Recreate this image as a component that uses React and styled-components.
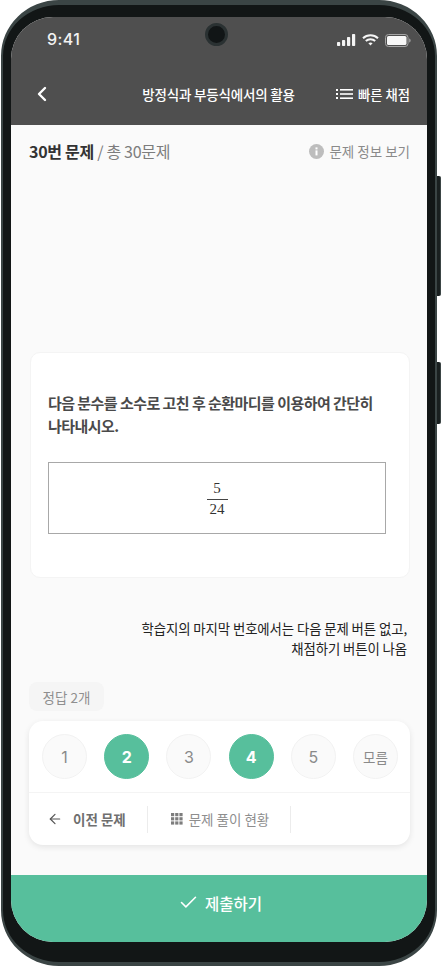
import React from 'react';
import styled, { createGlobalStyle } from 'styled-components';
import { ArrowLeft, Check, ChevronLeft } from 'lucide-react';

const SANS = `"Noto Sans CJK KR", "Noto Sans", sans-serif`;
const GREEN = '#57bf9c';

const GlobalStyle = createGlobalStyle`
  html, body {
    margin: 0;
    padding: 0;
    background: #fff;
  }
  body {
    font-family: ${SANS};
  }
  * {
    box-sizing: border-box;
  }
`;

const Phone = styled.div`
  position: relative;
  width: 436px;
  height: 966px;
  margin-left: 1px;
  padding: 12px 8px 19px 8px;
  background: #121616;
  border-style: solid;
  border-color: #3b4545;
  border-width: 5px 2px 4px 2px;
  border-radius: 58px / 56px;
`;

const SideButton = styled.div`
  position: absolute;
  left: 434px;
  top: ${(p) => p.$top}px;
  width: 4px;
  height: ${(p) => p.$height}px;
  background: #1a2020;
  border-right: 1px solid #3b4545;
  border-radius: 0 2px 2px 0;
`;

const Screen = styled.div`
  display: flex;
  flex-direction: column;
  height: 925px;
  border-radius: 42px;
  overflow: hidden;
  background: #fafafa;
`;

const Header = styled.header`
  flex: none;
  height: 108px;
  background: #4f4f4f;
  color: #fff;
  padding: 0 17px 0 25px;
`;

const StatusBar = styled.div`
  position: relative;
  display: flex;
  align-items: center;
  justify-content: space-between;
  height: 44px;
  padding: 0 0 0 11px;
`;

const Time = styled.span`
  font-family: Inter, sans-serif;
  font-size: 16px;
  font-weight: 500;
  letter-spacing: 0.4px;
  color: #f2f2f2;
`;

const Camera = styled.div`
  position: absolute;
  left: 169px;
  top: 6px;
  width: 23px;
  height: 23px;
  border-radius: 50%;
  background: #111516;
  border: 3px solid #2a3132;
`;

const StatusIcons = styled.div`
  display: flex;
  align-items: center;
  gap: 6px;
  margin: 2px -1px 0 0;
`;

const NavBar = styled.div`
  display: flex;
  align-items: center;
  height: 24px;
  margin-top: 21px;
`;

const BackButton = styled.div`
  display: flex;
  flex: none;
  width: 71px;
  margin-left: -6px;
`;

const NavTitle = styled.div`
  flex: 1;
  text-align: center;
  font-size: 13.5px;
  font-weight: 500;
  letter-spacing: -0.2px;
  white-space: nowrap;
`;

const QuickGrade = styled.div`
  display: flex;
  flex: none;
  align-items: center;
  gap: 4px;
  font-size: 13.3px;
  font-weight: 500;
  white-space: nowrap;
`;

const Content = styled.main`
  flex: 1;
  display: flex;
  flex-direction: column;
  padding: 0 17px 0 18px;
`;

const TitleRow = styled.div`
  display: flex;
  align-items: center;
  justify-content: space-between;
  height: 52px;
`;

const ProblemTitle = styled.div`
  font-size: 16px;
  letter-spacing: -0.3px;
  color: #7d7d7d;
  strong {
    font-weight: 700;
    color: #333;
  }
`;

const InfoLink = styled.div`
  display: flex;
  align-items: center;
  gap: 5px;
  font-size: 13.5px;
  color: #8a8a8a;
`;

const QuestionCard = styled.section`
  height: 226px;
  margin: 175px 0 0 1px;
  padding: 38px 17px 0;
  background: #fff;
  border: 1px solid #f4f4f4;
  border-radius: 10px;
`;

const Question = styled.p`
  margin: 0;
  width: 330px;
  font-size: 15px;
  font-weight: 600;
  line-height: 23px;
  letter-spacing: -0.55px;
  color: #4a4a4a;
`;

const FormulaBox = styled.div`
  display: flex;
  align-items: center;
  justify-content: center;
  width: 338px;
  height: 72px;
  margin-top: 25px;
  background: #fff;
  border: 1px solid #a8a8a8;
`;

const Fraction = styled.div`
  display: flex;
  flex-direction: column;
  align-items: center;
  width: 21px;
  font-family: "Liberation Serif", serif;
  font-size: 15px;
  color: #333;
  span:first-child {
    width: 100%;
    text-align: center;
    border-bottom: 1px solid #444;
    padding-bottom: 3px;
    line-height: 16px;
  }
  span:last-child {
    padding-top: 1px;
    line-height: 16px;
  }
`;

const Note = styled.p`
  margin: 40px 3px 0 0;
  text-align: right;
  font-size: 13.4px;
  line-height: 20px;
  letter-spacing: -0.1px;
  color: #222;
`;

const AnswerCount = styled.div`
  display: flex;
  align-items: center;
  justify-content: center;
  width: 75px;
  height: 29px;
  margin-top: 24px;
  border-radius: 8px;
  background: #f5f5f5;
  font-size: 13.5px;
  color: #8f8f8f;
`;

const AnswerCard = styled.section`
  height: 124px;
  margin-top: 10px;
  background: #fff;
  border-radius: 14px;
  box-shadow: 0 2px 6px rgba(0, 0, 0, 0.09);
`;

const Choices = styled.div`
  display: flex;
  justify-content: space-between;
  height: 72px;
  padding: 13px 12px 0 13px;
  border-bottom: 1px solid #f4f4f4;
`;

const Choice = styled.div`
  display: flex;
  align-items: center;
  justify-content: center;
  width: 45px;
  height: 45px;
  border-radius: 50%;
  font-family: Inter, "Noto Sans CJK KR", sans-serif;
  font-size: ${(p) => (p.$small ? '13.5px' : '16px')};
  font-weight: ${(p) => (p.$active ? 700 : 400)};
  color: ${(p) => (p.$active ? '#fff' : '#8a8a8a')};
  background: ${(p) => (p.$active ? GREEN : '#fafafa')};
  border: 1px solid ${(p) => (p.$active ? GREEN : '#f2f2f2')};
`;

const ActionRow = styled.div`
  display: flex;
  align-items: center;
  height: 52px;
`;

const ActionButton = styled.div`
  display: flex;
  align-items: center;
  justify-content: ${(p) => (p.$center ? 'center' : 'flex-start')};
  width: ${(p) => p.$width}px;
  height: 27px;
  padding-left: ${(p) => (p.$center ? 2 : 18)}px;
  gap: ${(p) => (p.$center ? 6 : 10)}px;
  border-right: 1px solid #ececec;
  font-size: 13.5px;
  font-weight: ${(p) => (p.$center ? 400 : 700)};
  color: ${(p) => (p.$center ? '#8e8e8e' : '#6f6f6f')};
`;

const SubmitBar = styled.footer`
  flex: none;
  display: flex;
  align-items: center;
  justify-content: center;
  gap: 6px;
  height: 67px;
  padding: 0 0 12px 2px;
  background: ${GREEN};
  color: #fff;
  font-size: 15.5px;
  font-weight: 500;
`;

const Signal = () => (
  <svg width="19" height="12" viewBox="0 0 19 12" fill="#f5f5f5">
    <rect x="0" y="8" width="3.2" height="4" rx="0.8" />
    <rect x="5" y="6" width="3.2" height="6" rx="0.8" />
    <rect x="10" y="3" width="3.2" height="9" rx="0.8" />
    <rect x="15" y="0" width="3.2" height="12" rx="0.8" />
  </svg>
);

const Wifi = () => (
  <svg width="17" height="12" viewBox="0 0 17 12" fill="none" stroke="#f5f5f5" strokeWidth="2">
    <path d="M1 4.2C5.2 0.2 11.8 0.2 16 4.2" />
    <path d="M3.8 7C6.4 4.6 10.6 4.6 13.2 7" />
    <path d="M8.5 11.4L6.4 9.3C7.6 8.3 9.4 8.3 10.6 9.3Z" fill="#f5f5f5" stroke="none" />
  </svg>
);

const Battery = () => (
  <svg width="26" height="13" viewBox="0 0 26 13">
    <rect x="0.5" y="0.5" width="22.5" height="12" rx="3" fill="none" stroke="#a5a5a5" />
    <rect x="2" y="2" width="19.5" height="9" rx="1.6" fill="#f8f8f8" />
    <path d="M24.2 4.5C25.2 4.9 25.6 5.6 25.6 6.5C25.6 7.4 25.2 8.1 24.2 8.5Z" fill="#a5a5a5" />
  </svg>
);

const ListIcon = () => (
  <svg width="18" height="12" viewBox="0 0 18 12" fill="#fff">
    <rect x="0" y="1" width="2" height="2" />
    <rect x="0" y="5" width="2" height="2" />
    <rect x="0" y="9" width="2" height="2" />
    <rect x="4" y="1" width="13" height="1.6" />
    <rect x="4" y="5.2" width="13" height="1.6" />
    <rect x="4" y="9.4" width="13" height="1.6" />
  </svg>
);

const InfoIcon = () => (
  <svg width="15" height="15" viewBox="0 0 15 15">
    <circle cx="7.5" cy="7.5" r="7.5" fill="#bdbdbd" />
    <rect x="6.5" y="6.4" width="2" height="5" fill="#fff" />
    <rect x="6.5" y="3.4" width="2" height="2" fill="#fff" />
  </svg>
);

const GridIcon = () => (
  <svg width="12" height="12" viewBox="0 0 12 12" fill="#7d7d7d">
    {[0, 4.2, 8.4].map((y) =>
      [0, 4.2, 8.4].map((x) => <rect key={`${x}-${y}`} x={x} y={y} width="3.2" height="3.2" />)
    )}
  </svg>
);

const choices = [
  { label: '1' },
  { label: '2', active: true },
  { label: '3' },
  { label: '4', active: true },
  { label: '5' },
  { label: '모름', small: true },
];

const App = () => {
  return (
    <>
      <GlobalStyle />
      <Phone>
        <SideButton $top={171} $height={120} />
        <SideButton $top={357} $height={62} />
        <Screen>
          <Header>
            <StatusBar>
              <Time>9:41</Time>
              <Camera />
              <StatusIcons>
                <Signal />
                <Wifi />
                <Battery />
              </StatusIcons>
            </StatusBar>
            <NavBar>
              <BackButton>
                <ChevronLeft size={24} strokeWidth={2.4} />
              </BackButton>
              <NavTitle>방정식과 부등식에서의 활용</NavTitle>
              <QuickGrade>
                <ListIcon />
                빠른 채점
              </QuickGrade>
            </NavBar>
          </Header>
          <Content>
            <TitleRow>
              <ProblemTitle>
                <strong>30번 문제</strong> / 총 30문제
              </ProblemTitle>
              <InfoLink>
                <InfoIcon />
                문제 정보 보기
              </InfoLink>
            </TitleRow>
            <QuestionCard>
              <Question>다음 분수를 소수로 고친 후 순환마디를 이용하여 간단히 나타내시오.</Question>
              <FormulaBox>
                <Fraction>
                  <span>5</span>
                  <span>24</span>
                </Fraction>
              </FormulaBox>
            </QuestionCard>
            <Note>
              학습지의 마지막 번호에서는 다음 문제 버튼 없고,
              <br />
              채점하기 버튼이 나옴
            </Note>
            <AnswerCount>정답 2개</AnswerCount>
            <AnswerCard>
              <Choices>
                {choices.map((c) => (
                  <Choice key={c.label} $active={c.active} $small={c.small}>
                    {c.label}
                  </Choice>
                ))}
              </Choices>
              <ActionRow>
                <ActionButton $width={119}>
                  <ArrowLeft size={16} strokeWidth={1.8} color="#555" />
                  이전 문제
                </ActionButton>
                <ActionButton $center $width={143}>
                  <GridIcon />
                  문제 풀이 현황
                </ActionButton>
              </ActionRow>
            </AnswerCard>
          </Content>
          <SubmitBar>
            <Check size={21} strokeWidth={1.8} />
            제출하기
          </SubmitBar>
        </Screen>
      </Phone>
    </>
  );
};

export default App;
